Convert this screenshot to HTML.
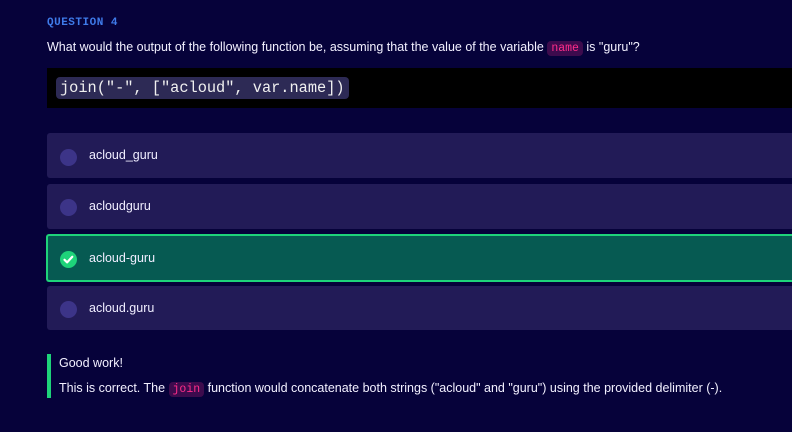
<!DOCTYPE html>
<html><head><style>
*{margin:0;padding:0;box-sizing:border-box}
body{width:792px;height:432px;background:#06023a;font-family:"Liberation Sans",sans-serif;color:#fff;position:relative;overflow:hidden}
.q{position:absolute;left:47px;top:17px;font-family:"Liberation Mono",monospace;font-weight:bold;font-size:11px;color:#3f7bea;letter-spacing:0.5px}
.t{position:absolute;left:47px;top:40px;font-size:12.5px;color:#f2f0ff}
.ic{font-family:"Liberation Mono",monospace;color:#ff2d8a;background:#3d0b4d;border-radius:4px;padding:1px 4px;font-size:11.5px}
.code{position:absolute;left:47px;top:68px;width:745px;height:40px;background:#000}
.code span{position:absolute;left:9px;top:9px;height:22px;line-height:22px;padding:0 4px;background:#2d2a55;border-radius:4px;font-family:"Liberation Mono",monospace;font-size:15.3px;color:#f0f0f0}
.o{position:absolute;left:47px;width:745px;background:#221b57;border-radius:3px 0 0 3px}
.o .c{position:absolute;left:13px;width:17px;height:17px;border-radius:50%;background:#3c3488}
.o .l{position:absolute;left:42px;font-size:12.5px;color:#f0eeff}
.sel{background:#065a52;border:2px solid #1ed37a;border-right:none;left:46px;width:746px}
.fb{position:absolute;left:47px;top:354px;width:4px;height:44px;background:#1ed37a}
.f1{position:absolute;left:59px;top:356px;font-size:12.5px;color:#f2f0ff}
.f2{position:absolute;left:59px;top:381px;font-size:12.5px;color:#f2f0ff}
</style></head><body>
<div class="q">QUESTION 4</div>
<div class="t">What would the output of the following function be, assuming that the value of the variable <span class="ic">name</span> is "guru"?</div>
<div class="code"><span>join("-", ["acloud", var.name])</span></div>
<div class="o" style="top:133px;height:45px"><div class="c" style="top:16px"></div><div class="l" style="top:15px">acloud_guru</div></div>
<div class="o" style="top:184px;height:45px"><div class="c" style="top:15px"></div><div class="l" style="top:15px">acloudguru</div></div>
<div class="o sel" style="top:234px;height:48px"><div style="position:absolute;left:12px;top:15px;width:17px;height:17px;border-radius:50%;background:#1ed37a"><svg width="17" height="17" viewBox="0 0 17 17"><path d="M4.5 8.8l2.6 2.6 5.2-5.6" stroke="#fff" stroke-width="2.2" fill="none" stroke-linecap="round" stroke-linejoin="round"/></svg></div><div class="l" style="left:41px;top:15px">acloud-guru</div></div>
<div class="o" style="top:286px;height:44px"><div class="c" style="top:15px"></div><div class="l" style="top:15px">acloud.guru</div></div>
<div class="fb"></div>
<div class="f1">Good work!</div>
<div class="f2">This is correct. The <span class="ic">join</span> function would concatenate both strings ("acloud" and "guru") using the provided delimiter (-).</div>
</body></html>
